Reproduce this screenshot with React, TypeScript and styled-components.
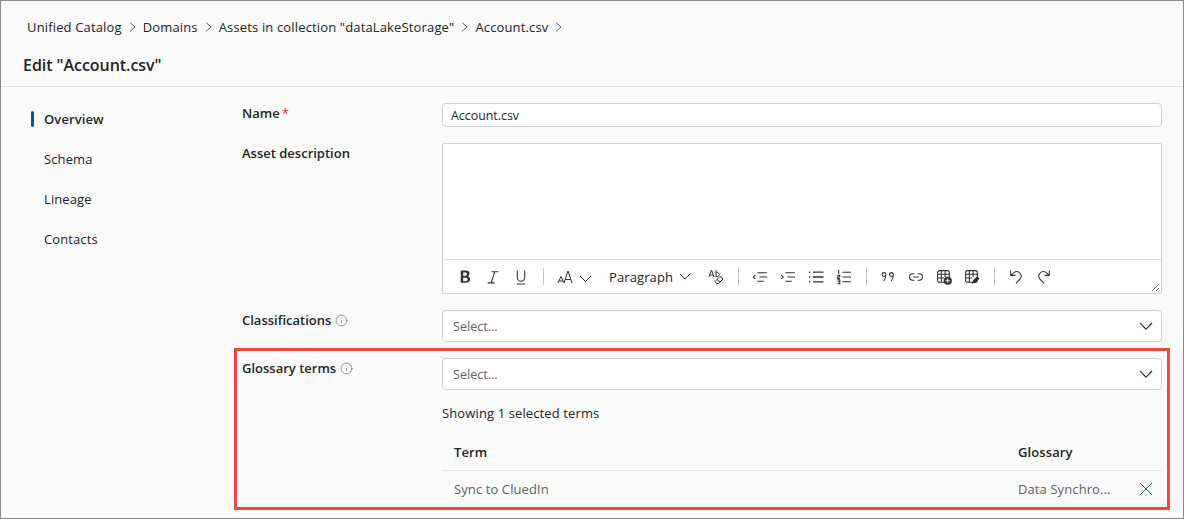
import React from "react";
import styled, { createGlobalStyle } from "styled-components";
import { Info } from "lucide-react";

const GlobalStyle = createGlobalStyle`
  html, body {
    margin: 0;
    padding: 0;
    background: #fafafa;
    font-family: "Open Sans", "Noto Sans", "Liberation Sans", sans-serif;
    color: #242424;
  }
  * { box-sizing: border-box; }
`;

const Frame = styled.div`
  width: 1184px;
  height: 519px;
  overflow: hidden;
  background: #fafafa;
  border: 1px solid #8a8a8a;
`;

const Breadcrumbs = styled.nav`
  display: flex;
  align-items: center;
  height: 18px;
  margin-top: 17px;
  padding-left: 26px;
  font-size: 13px;
  letter-spacing: 0.15px;
  color: #242424;
`;

const Crumb = styled.span`
  white-space: nowrap;
`;

const CrumbSep = styled.svg`
  width: 7px;
  height: 10px;
  margin: 0 7px;
  flex: none;
`;

const Title = styled.h1`
  margin: 9px 0 0;
  padding: 0 0 4px 22px;
  height: 42px;
  line-height: 40px;
  font-size: 16px;
  font-weight: 600;
  letter-spacing: -0.05px;
  border-bottom: 1px solid #e1e1e1;
`;

const Body = styled.div`
  display: grid;
  grid-template-columns: 241px 1fr;
`;

const Side = styled.ul`
  list-style: none;
  margin: 0;
  padding: 12px 0 0 30px;
`;

const SideItem = styled.li<{ $active?: boolean }>`
  display: flex;
  align-items: center;
  height: 40px;
  padding-left: 13px;
  font-size: 13px;
  letter-spacing: 0.1px;
  font-weight: ${(p) => (p.$active ? 600 : 400)};
  position: relative;
  &::before {
    content: "";
    display: ${(p) => (p.$active ? "block" : "none")};
    position: absolute;
    left: 0;
    top: 12px;
    width: 3px;
    height: 16px;
    background: #0f548c;
    border-radius: 2px;
  }
`;

const Form = styled.div`
  display: flex;
  flex-direction: column;
  padding: 16px 21px 0 0;
`;

const Row = styled.div<{ $gap?: number }>`
  display: grid;
  grid-template-columns: 200px 720px;
  margin-bottom: ${(p) => p.$gap ?? 16}px;
`;

const Label = styled.div`
  display: flex;
  align-items: center;
  gap: 4px;
  height: 20px;
  font-size: 13px;
  font-weight: 600;
`;

const Required = styled.span`
  color: #d13438;
  font-weight: 400;
  margin-left: -2px;
`;

const Field = styled.div`
  display: flex;
  align-items: center;
  justify-content: space-between;
  height: 32px;
  padding: 0 8px 0 10px;
  background: #fff;
  border: 1px solid #d1d1d1;
  border-radius: 4px;
  font-size: 12.6px;
  color: #616161;
`;

const NameField = styled(Field)`
  height: 24px;
  padding: 0 8px;
  font-size: 12.4px;
  color: #242424;
`;

const Editor = styled.div`
  height: 151px;
  background: #fff;
  border: 1px solid #d1d1d1;
  border-radius: 2px;
  display: flex;
  flex-direction: column;
  position: relative;
`;

const EditArea = styled.div`
  flex: 1;
  border-bottom: 1px solid #e0e0e0;
`;

const Toolbar = styled.div`
  display: flex;
  align-items: center;
  height: 33px;
  padding: 0 0 0 8px;
  color: #323130;
`;

const ToolBtn = styled.span<{ $w?: number }>`
  display: inline-flex;
  align-items: center;
  justify-content: center;
  width: ${(p) => p.$w ?? 28}px;
  height: 24px;
  flex: none;
`;

const ToolSep = styled.span`
  width: 1px;
  height: 17px;
  margin: 0 7.5px;
  background: #c8c6c4;
  flex: none;
`;

const ParaBtn = styled.span`
  display: inline-flex;
  align-items: center;
  gap: 6px;
  width: 99px;
  flex: none;
  padding-left: 6px;
  font-size: 13px;
  letter-spacing: 0.1px;
  color: #242424;
`;

const Resize = styled.svg`
  position: absolute;
  right: 1px;
  bottom: 1px;
  width: 9px;
  height: 9px;
`;

const Terms = styled.section`
  position: relative;
`;

const Highlight = styled.div`
  position: absolute;
  left: -8px;
  top: -10px;
  width: 936px;
  height: 162px;
  border: 3px solid #e74c3c;
  pointer-events: none;
`;

const Showing = styled.div`
  height: 18px;
  margin-top: 14px;
  font-size: 13px;
  line-height: 18px;
  letter-spacing: 0.12px;
`;

const TableHead = styled.div`
  display: grid;
  grid-template-columns: 564px 1fr;
  align-items: center;
  height: 37px;
  margin-top: 12px;
  padding-left: 12px;
  border-bottom: 1px solid #e6e6e6;
  font-size: 13px;
  font-weight: 600;
  letter-spacing: 0.1px;
`;

const TableRow = styled.div`
  display: grid;
  grid-template-columns: 564px 121px 1fr;
  align-items: center;
  height: 36px;
  padding-left: 12px;
  font-size: 13px;
  letter-spacing: 0.1px;
  color: #616161;
`;

const sw = { fill: "none", stroke: "currentColor", strokeWidth: 1 };

const Sep = () => (
  <CrumbSep viewBox="0 0 7 10">
    <path d="M1 0.5 L6 5 L1 9.5" fill="none" stroke="#616161" strokeWidth="1" />
  </CrumbSep>
);

const Chevron = ({ w = 14 }: { w?: number }) => (
  <svg width={w} height={w * 0.6} viewBox="0 0 14 8.4" style={{ flex: "none" }}>
    <path d="M1 1 L7 7.2 L13 1" fill="none" stroke="#17324d" strokeWidth="1.1" />
  </svg>
);

const CloseIcon = () => (
  <svg width="14" height="14" viewBox="0 0 14 14">
    <path d="M1 1 L13 13 M13 1 L1 13" stroke="#1f6aa5" strokeWidth="1" />
  </svg>
);

const icons: Record<string, React.ReactNode> = {
  bold: <path d="M3.500 1.500h4.700c2.300 0 3.500 1.100 3.500 2.900 0 1.300-.8 2.200-1.900 2.500 1.500.2 2.500 1.300 2.500 2.800 0 2-1.500 3.300-3.900 3.300H3.500zM5.800 3.300v3h1.900c1.100 0 1.700-.5 1.700-1.500 0-1-.6-1.500-1.800-1.500zM5.800 8.100v3.400H8c1.300 0 2-.6 2-1.700 0-1.100-.8-1.700-2.100-1.700z" fill="currentColor" />,
  italic: <path d="M6 2.500h6.500M2.500 13h6.500M9.200 2.500 5.800 13" {...sw} />,
  underline: <path d="M4 1.500v6.500a3.500 3.500 0 0 0 7 0V1.500M3.500 14h8" {...sw} />,
  outdent: <path d="M5 3.500h9M7 7.500h7M5 11.500h6M3 5.800 1.200 7.500 3 9.200" {...sw} />,
  indent: <path d="M5 3.500h9M7 7.500h7M5 11.500h6M1.200 5.800 3 7.500 1.200 9.200" {...sw} />,
  bullets: <path d="M4.500 3h10M4.500 7.500h10M4.500 12h10M1.500 2.300v1.400M1.500 6.800v1.400M1.500 11.300v1.400" fill="none" stroke="currentColor" strokeWidth="1.200" />,
  numbers: <path d="M6 3h8M6 7.500h8M6 12h8M2.500 .8v4M1.300 6h2.200v1.500H1.500v1.500h2.200M1.300 10.300h2.300v3.500H1.300M1.800 12h1.800" {...sw} />,
  quote: <path d="M5.500 5.200a1.800 1.800 0 1 1-3.600 0 1.800 1.800 0 0 1 3.600 0c0 2.500-.7 4.500-2 6.300M12.500 5.200a1.800 1.800 0 1 1-3.600 0 1.800 1.800 0 0 1 3.600 0c0 2.500-.7 4.500-2 6.300" {...sw} />,
  link: <path d="M6 4.500H4.500a3 3 0 0 0 0 6H6M9 4.500h1.500a3 3 0 0 1 0 6H9M5 7.500h5" {...sw} />,
  tableAdd: (
    <>
      <rect x="1.500" y="1.500" width="11" height="11" rx="2" {...sw} />
      <path d="M1.500 5h11M1.500 8.500h6M5 1.500v11M8.500 1.500v6" {...sw} />
      <circle cx="11" cy="11" r="3.800" fill="#323130" />
      <path d="M11 9v4M9 11h4" stroke="#fff" strokeWidth="1" />
    </>
  ),
  tableEdit: (
    <>
      <rect x="1.500" y="1.500" width="11" height="11" rx="2" {...sw} />
      <path d="M1.500 5h11M1.500 8.500h6M5 1.500v11M8.500 1.500v6" {...sw} />
      <path d="M7.500 13.800 8.300 10.800 12.300 6.800 14.600 9 10.600 13z" fill="#323130" />
    </>
  ),
  undo: <path d="M2.500 1.500v4.500H7M2.500 6 5.800 3.200a4.200 4.200 0 0 1 5.700 6L7.500 13.500" {...sw} />,
  redo: <path d="M12.500 1.500v4.500H8M12.500 6 9.200 3.200a4.200 4.200 0 0 0-5.700 6l4 4.300" {...sw} />,
};

const Glyph = ({ name }: { name: string }) => (
  <ToolBtn>
    <svg width="16" height="16" viewBox="0 0 15 15">
      {icons[name]}
    </svg>
  </ToolBtn>
);

const FontSize = () => (
  <ToolBtn $w={52}>
    <svg width="40" height="16" viewBox="0 0 40 16">
      <path d="M1 14 4 7.500 7 14M2 12h4M7 14 11 2 15 14M8.300 10.500h5.400" {...sw} />
      <path d="M23 7l5.500 5.500L34 7" {...sw} />
    </svg>
  </ToolBtn>
);

const ClearFormat = () => (
  <ToolBtn>
    <svg width="17" height="17" viewBox="0 0 17 17">
      <path d="M1 9 3.500 2 6 9M1.800 7h3.400M8 2v7M8 8a2 2 0 1 0 0-3" {...sw} />
      <path d="M7 13.500 12 8.500l3 2.500-4.500 4.500H8.500zM9 11.500l3 2.500" {...sw} />
    </svg>
  </ToolBtn>
);

const SelectBox = () => (
  <Field>
    Select...
    <Chevron />
  </Field>
);

export default function App() {
  return (
    <Frame>
      <GlobalStyle />
      <Breadcrumbs>
        <Crumb>Unified Catalog</Crumb>
        <Sep />
        <Crumb>Domains</Crumb>
        <Sep />
        <Crumb>Assets in collection "dataLakeStorage"</Crumb>
        <Sep />
        <Crumb>Account.csv</Crumb>
        <Sep />
      </Breadcrumbs>
      <Title>Edit "Account.csv"</Title>
      <Body>
        <Side>
          <SideItem $active>Overview</SideItem>
          <SideItem>Schema</SideItem>
          <SideItem>Lineage</SideItem>
          <SideItem>Contacts</SideItem>
        </Side>
        <Form>
          <Row>
            <Label>
              Name <Required>*</Required>
            </Label>
            <NameField>Account.csv</NameField>
          </Row>
          <Row>
            <Label>Asset description</Label>
            <Editor>
              <EditArea />
              <Toolbar>
                <Glyph name="bold" />
                <Glyph name="italic" />
                <Glyph name="underline" />
                <ToolSep />
                <FontSize />
                <ParaBtn>
                  Paragraph
                  <Chevron w={12} />
                </ParaBtn>
                <ClearFormat />
                <ToolSep />
                <Glyph name="outdent" />
                <Glyph name="indent" />
                <Glyph name="bullets" />
                <Glyph name="numbers" />
                <ToolSep />
                <Glyph name="quote" />
                <Glyph name="link" />
                <Glyph name="tableAdd" />
                <Glyph name="tableEdit" />
                <ToolSep />
                <Glyph name="undo" />
                <Glyph name="redo" />
              </Toolbar>
              <Resize viewBox="0 0 9 9">
                <path d="M1 8 8 1M5 8 8 5" stroke="#777" strokeWidth="1" />
              </Resize>
            </Editor>
          </Row>
          <Row>
            <Label>
              Classifications <Info size={13} strokeWidth={1.2} color="#616161" />
            </Label>
            <SelectBox />
          </Row>
          <Terms>
            <Highlight />
            <Row $gap={0}>
              <Label>
                Glossary terms <Info size={13} strokeWidth={1.2} color="#616161" />
              </Label>
              <div>
                <SelectBox />
                <Showing>Showing 1 selected terms</Showing>
                <TableHead>
                  <span>Term</span>
                  <span>Glossary</span>
                </TableHead>
                <TableRow>
                  <span>Sync to CluedIn</span>
                  <span>Data Synchro...</span>
                  <CloseIcon />
                </TableRow>
              </div>
            </Row>
          </Terms>
        </Form>
      </Body>
    </Frame>
  );
}
